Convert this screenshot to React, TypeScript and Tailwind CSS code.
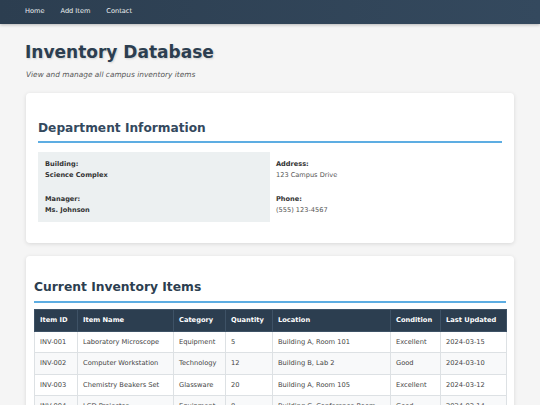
const items = [
  { id: "INV-001", name: "Laboratory Microscope", category: "Equipment", qty: 5, location: "Building A, Room 101", condition: "Excellent", updated: "2024-03-15" },
  { id: "INV-002", name: "Computer Workstation", category: "Technology", qty: 12, location: "Building B, Lab 2", condition: "Good", updated: "2024-03-10" },
  { id: "INV-003", name: "Chemistry Beakers Set", category: "Glassware", qty: 20, location: "Building A, Room 105", condition: "Excellent", updated: "2024-03-12" },
  { id: "INV-004", name: "LCD Projector", category: "Equipment", qty: 8, location: "Building C, Conference Room", condition: "Good", updated: "2024-03-14" },
];

const cols = ["Item ID", "Item Name", "Category", "Quantity", "Location", "Condition", "Last Updated"];
const widths = ["w-[43px]", "w-[96px]", "w-[52px]", "w-[47px]", "w-[118px]", "w-[50px]", "w-[66px]"];

function Field({ label, value, strong }: { label: string; value: string; strong?: boolean }) {
  return (
    <div className="leading-[10.5px]">
      <div className="font-bold text-[#333]">{label}</div>
      <div className={strong ? "font-bold text-[#333]" : "text-[#555]"}>{value}</div>
    </div>
  );
}

export default function App() {
  return (
    <div className="min-h-[405px] bg-[#f5f5f5] font-['DejaVu_Sans',sans-serif] text-[#333]">
      <nav className="h-6 flex items-center gap-[16px] pl-[25px] bg-gradient-to-r from-[#2c3e50] to-[#34495e] shadow-[0_1px_3px_rgba(0,0,0,0.25)] text-[6.6px] text-[#ecf0f1]">
        <a>Home</a>
        <a>Add Item</a>
        <a>Contact</a>
      </nav>

      <main className="px-[26px] pb-4">
        <h1 className="mt-[17px] ml-[-1px] text-[17px] leading-[22px] font-bold text-[#2c3e50] [text-shadow:1px_1px_2px_rgba(0,0,0,0.15)]">
          Inventory Database
        </h1>
        <p className="mt-[7px] text-[7.4px] leading-[10px] italic text-[#555]">
          View and manage all campus inventory items
        </p>

        <section className="mt-[13px] bg-white rounded-[4px] shadow-[0_1px_4px_rgba(0,0,0,0.12)] px-[12px] pt-[12px] pb-[21px]">
          <h2 className="mt-[16px] pb-[6px] border-b-2 border-[#5dade2] text-[12.2px] leading-[14px] font-bold text-[#34495e]">
            Department Information
          </h2>
          <div className="mt-[9px] grid grid-cols-2 text-[6.6px]">
            <div className="bg-[#ecf0f1] px-[7px] py-[7px] flex flex-col gap-[14px]">
              <Field label="Building:" value="Science Complex" strong />
              <Field label="Manager:" value="Ms. Johnson" strong />
            </div>
            <div className="px-[6px] py-[7px] flex flex-col gap-[14px]">
              <Field label="Address:" value="123 Campus Drive" />
              <Field label="Phone:" value="(555) 123-4567" />
            </div>
          </div>
        </section>

        <section className="mt-[13px] bg-white rounded-[4px] shadow-[0_1px_4px_rgba(0,0,0,0.12)] px-[8px] pt-[12px] pb-[12px]">
          <h2 className="mt-[12px] pb-[6px] border-b-2 border-[#5dade2] text-[12.3px] leading-[15px] font-bold text-[#2c3e50]">
            Current Inventory Items
          </h2>
          <table className="mt-[6px] w-full table-fixed border-collapse text-[6.7px]">
            <thead>
              <tr className="bg-[#2c3e50] text-white">
                {cols.map((c, i) => (
                  <th key={c} className={`${widths[i]} h-[21.5px] px-[5px] text-left font-bold border border-[#3e5266]`}>
                    {c}
                  </th>
                ))}
              </tr>
            </thead>
            <tbody>
              {items.map((it, r) => (
                <tr key={it.id} className={r % 2 === 1 ? "bg-[#f8f9fa]" : "bg-white"}>
                  {[it.id, it.name, it.category, String(it.qty), it.location, it.condition, it.updated].map((v, i) => (
                    <td key={i} className="h-[21.5px] px-[5px] border border-[#dde1e4] text-[#444] whitespace-nowrap overflow-hidden">
                      {v}
                    </td>
                  ))}
                </tr>
              ))}
            </tbody>
          </table>
        </section>
      </main>
    </div>
  );
}
